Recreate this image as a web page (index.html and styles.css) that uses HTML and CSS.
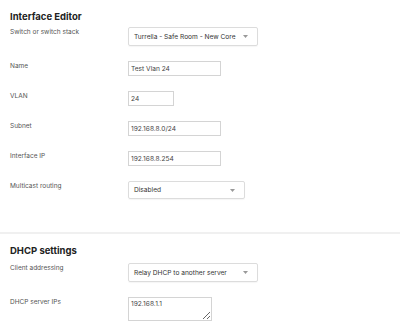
FILE: index.html
```html
<!DOCTYPE html>
<html>
<head>
<meta charset="utf-8">
<link rel="stylesheet" href="styles.css">
</head>
<body>
<section class="section first">
  <h2 class="title">Interface Editor</h2>
  <div class="row">
    <div class="label">Switch or switch stack</div>
    <div class="select w-stack"><span>Turrella - Safe Room - New Core</span><svg class="arrow" width="5" height="3" viewBox="0 0 5 3"><path d="M0 0H5L2.5 3Z" fill="#999"/></svg></div>
  </div>
  <div class="row">
    <div class="label">Name</div>
    <input class="input w-name" value="Test Vlan 24">
  </div>
  <div class="row">
    <div class="label">VLAN</div>
    <input class="input w-vlan" value="24">
  </div>
  <div class="row">
    <div class="label">Subnet</div>
    <input class="input w-name" value="192.168.8.0/24">
  </div>
  <div class="row">
    <div class="label">Interface IP</div>
    <input class="input w-name" value="192.168.8.254">
  </div>
  <div class="row">
    <div class="label">Multicast routing</div>
    <div class="select w-multi"><span>Disabled</span><svg class="arrow" width="5" height="3" viewBox="0 0 5 3"><path d="M0 0H5L2.5 3Z" fill="#999"/></svg></div>
  </div>
</section>
<hr class="divider">
<section class="section second">
  <h2 class="title">DHCP settings</h2>
  <div class="row">
    <div class="label">Client addressing</div>
    <div class="select w-stack"><span>Relay DHCP to another server</span><svg class="arrow" width="5" height="3" viewBox="0 0 5 3"><path d="M0 0H5L2.5 3Z" fill="#999"/></svg></div>
  </div>
  <div class="row">
    <div class="label">DHCP server IPs</div>
    <textarea class="textarea">192.168.1.1</textarea>
  </div>
</section>
</body>
</html>
```
FILE: styles.css
```css
html, body {
  margin: 0;
  padding: 0;
  background: #fff;
}
body {
  font-family: Inter, "Noto Sans", sans-serif;
  color: #333;
  width: 400px;
  overflow: hidden;
}
.section {
  padding: 0 10px;
}
.first {
  padding-top: 10px;
  padding-bottom: 18px;
}
.second {
  padding-top: 10px;
}
.second .title {
  margin-bottom: 5px;
}
.title {
  margin: 0 0 3px;
  font-size: 9.5px;
  line-height: 14px;
  font-weight: 700;
  color: #222;
}
.row {
  display: grid;
  grid-template-columns: 118px auto;
  align-items: start;
  margin-bottom: 15px;
}
.label {
  font-size: 6.5px;
  line-height: 11px;
  color: #555;
}
.select {
  box-sizing: border-box;
  height: 19px;
  border: 1px solid #dcdcdc;
  border-radius: 2px;
  box-shadow: 0 1px 1px rgba(0,0,0,0.04);
  display: flex;
  align-items: center;
  justify-content: space-between;
  padding: 0 9px 0 5px;
  font-size: 6.6px;
  color: #333;
  white-space: nowrap;
}
.arrow {
  display: block;
  flex: none;
}
.w-stack { width: 130px; }
.w-multi { width: 117px; height: 18px; }
.input {
  box-sizing: border-box;
  height: 15px;
  border: 1px solid #d4d4d4;
  border-radius: 0;
  padding: 0 2px;
  margin: 0;
  font-family: Inter, "Noto Sans", sans-serif;
  font-size: 6.6px;
  color: #444;
  outline: none;
}
.w-name { width: 93px; }
.w-vlan { width: 46px; }
.textarea {
  box-sizing: border-box;
  width: 84px;
  height: 24px;
  border: 1px solid #d4d4d4;
  padding: 2px 2px;
  margin: 0;
  font-family: Inter, "Noto Sans", sans-serif;
  font-size: 6.6px;
  line-height: 9px;
  color: #444;
  resize: both;
  outline: none;
}
.divider {
  margin: 0;
  border: 0;
  height: 2px;
  background: #f0f0f0;
}
```
